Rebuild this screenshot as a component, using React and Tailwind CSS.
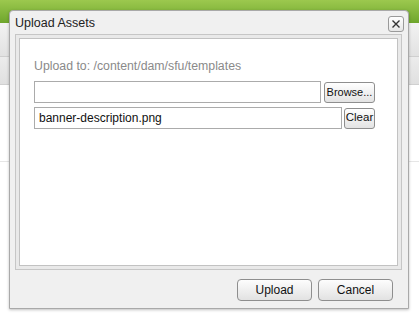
import React from "react";

export default function App() {
  const font = { fontFamily: '"Liberation Sans", Arial, sans-serif' };
  return (
    <div className="relative w-[419px] h-[319px] overflow-hidden bg-white" style={font}>
      {/* background page */}
      <div className="flex flex-col">
        <div className="h-[23px] bg-gradient-to-b from-[#9cc84e] to-[#6ea62c]" />
        <div className="h-[34px] bg-gradient-to-b from-[#f2f2f2] to-[#e2e2e2] border-b border-[#cfcfcf]" />
        <div className="h-[28px] bg-gradient-to-b from-[#ececec] to-[#e0e0e0] border-b border-[#d0d0d0]" />
        <div className="h-[77px] bg-white border-b border-[#e6e6e6]" />
      </div>

      {/* dialog */}
      <div className="absolute left-[9px] top-[10px] w-[400px] h-[299px] flex flex-col bg-[#f0f0f0] border border-[#a9a9a9] rounded-t-[4px] shadow-[0_1px_3px_rgba(0,0,0,0.25)]">
        <div className="h-[23px] flex items-center justify-between pl-[5px] pr-[4px] shrink-0">
          <span className="text-[12.5px] text-[#222] leading-none mt-[2px]">Upload Assets</span>
          <div className="w-[16px] h-[16px] mt-[3px] rounded-[3px] border border-[#9a9a9a] bg-gradient-to-b from-[#ffffff] to-[#e6e6e6] flex items-center justify-center">
            <svg width="10" height="10" viewBox="0 0 10 10">
              <path d="M1.5 1.5 L8.5 8.5 M8.5 1.5 L1.5 8.5" stroke="#333" strokeWidth="1.4" />
            </svg>
          </div>
        </div>
        <div className="px-[5px] pr-[6px] shrink-0">
          <div className="h-[236px] border border-[#c6c6c6] bg-[#e9e9e9] p-[3px]">
            <div className="h-full border border-[#c2c2c2] bg-white pl-[14px] pt-[20px]">
              <div className="text-[12.3px] leading-[14px] text-[#8a8a8a]">Upload to: /content/dam/sfu/templates</div>
              <div className="flex items-center gap-[3px] mt-[8px]">
                <div className="w-[287px] h-[22px] border border-[#ababab] bg-white" />
                <div className="w-[51px] h-[21px] rounded-[3px] border border-[#8e8e8e] bg-gradient-to-b from-[#ffffff] to-[#e3e3e3] flex items-center justify-center text-[11px] text-[#111] whitespace-nowrap">
                  Browse...
                </div>
              </div>
              <div className="flex items-center gap-[2px] mt-[4px]">
                <div className="w-[308px] h-[22px] border border-[#ababab] bg-white flex items-center pl-[4px] text-[12px] text-[#111]">
                  banner-description.png
                </div>
                <div className="w-[31px] h-[21px] rounded-[3px] border border-[#8e8e8e] bg-gradient-to-b from-[#ffffff] to-[#e3e3e3] flex items-center justify-center text-[11.5px] text-[#111]">
                  Clear
                </div>
              </div>
            </div>
          </div>
        </div>
        <div className="flex justify-end gap-[6px] pr-[15px] pt-[9px]">
          <div className="w-[75px] h-[22px] rounded-[4px] border border-[#8e8e8e] bg-gradient-to-b from-[#fdfdfd] to-[#e2e2e2] flex items-center justify-center text-[12px] text-[#111]">
            Upload
          </div>
          <div className="w-[75px] h-[22px] rounded-[4px] border border-[#8e8e8e] bg-gradient-to-b from-[#fdfdfd] to-[#e2e2e2] flex items-center justify-center text-[12px] text-[#111]">
            Cancel
          </div>
        </div>
      </div>
    </div>
  );
}
